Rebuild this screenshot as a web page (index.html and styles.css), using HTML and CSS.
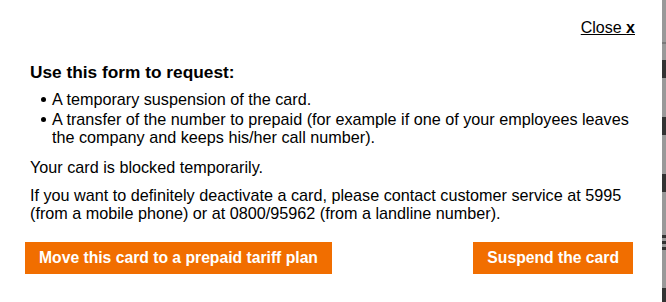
FILE: index.html
```html
<!DOCTYPE html>
<html>
<head>
<meta charset="utf-8">
<link rel="stylesheet" href="styles.css">
</head>
<body>
<div class="page">
  <div class="modal">
    <div class="close-row"><a class="close" href="#">Close <b>x</b></a></div>
    <h2 class="title">Use this form to request:</h2>
    <ul class="list">
      <li>A temporary suspension of the card.</li>
      <li>A transfer of the number to prepaid (for example if one of your employees leaves the company and keeps his/her call number).</li>
    </ul>
    <p class="text">Your card is blocked temporarily.</p>
    <p class="text">If you want to definitely deactivate a card, please contact customer service at 5995 (from a mobile phone) or at 0800/95962 (from a landline number).</p>
    <div class="actions">
      <button class="btn">Move this card to a prepaid tariff plan</button>
      <button class="btn">Suspend the card</button>
    </div>
  </div>
  <div class="backdrop">
    <span class="seg s1"></span><span class="seg mark"></span><span class="seg s2"></span><span class="seg dark"></span>
    <span class="seg s3"></span><span class="seg dark"></span><span class="seg s3"></span><span class="seg dark"></span>
    <span class="seg s4"></span><span class="seg thin"></span><span class="seg gap"></span><span class="seg thin"></span><span class="seg gap"></span><span class="seg thin"></span>
    <span class="seg s5"></span><span class="seg dark last"></span>
  </div>
</div>
</body>
</html>
```
FILE: styles.css
```css
* { box-sizing: border-box; }
html, body { margin: 0; padding: 0; background: #fff; }
body { font-family: "Liberation Sans", Arial, sans-serif; color: #000; }
.page { display: flex; width: 666px; height: 302px; overflow: hidden; }
.modal { width: 662px; height: 302px; padding: 18px 27px 0 30px; background: #fff; }
.close-row { text-align: right; font-size: 16px; line-height: 20px; }
.close { color: #000; text-decoration: underline; }
.title { margin: 24px 0 0; font-size: 17.3px; line-height: 20px; font-weight: bold; }
.list { list-style: none; margin: 8px 0 0; padding: 0 0 0 22px; font-size: 16.2px; line-height: 18px; }
.list li { position: relative; margin: 0; }
.list li + li { margin-top: 2px; }
.list li::before { content: ""; position: absolute; left: -11px; top: 7px; width: 5px; height: 5px; border-radius: 50%; background: #000; }
.text { margin: 11.5px 0 0; font-size: 16.2px; line-height: 18px; }
.text + .text { margin-top: 10px; }
.actions { display: flex; justify-content: space-between; margin-top: 20.5px; padding-right: 2px; }
.btn { height: 32px; padding: 0 14px; border: 0; background: #f16e00; color: #fff; font-family: "Liberation Sans", Arial, sans-serif; font-size: 15.7px; font-weight: bold; cursor: pointer; }
.actions .btn:first-child { margin-left: -5px; }
.backdrop { width: 4px; height: 302px; background: #999; display: flex; flex-direction: column; }
.seg { display: block; flex: none; }
.s1 { height: 42px; }
.mark { height: 2px; background: #7a7a7a; }
.s2 { height: 16px; }
.dark { height: 18px; background: #333; }
.s3 { height: 39px; }
.s4 { height: 43px; }
.thin { height: 3px; background: #333; }
.gap { height: 3px; }
.s5 { height: 38px; }
.last { height: 14px; }
```
